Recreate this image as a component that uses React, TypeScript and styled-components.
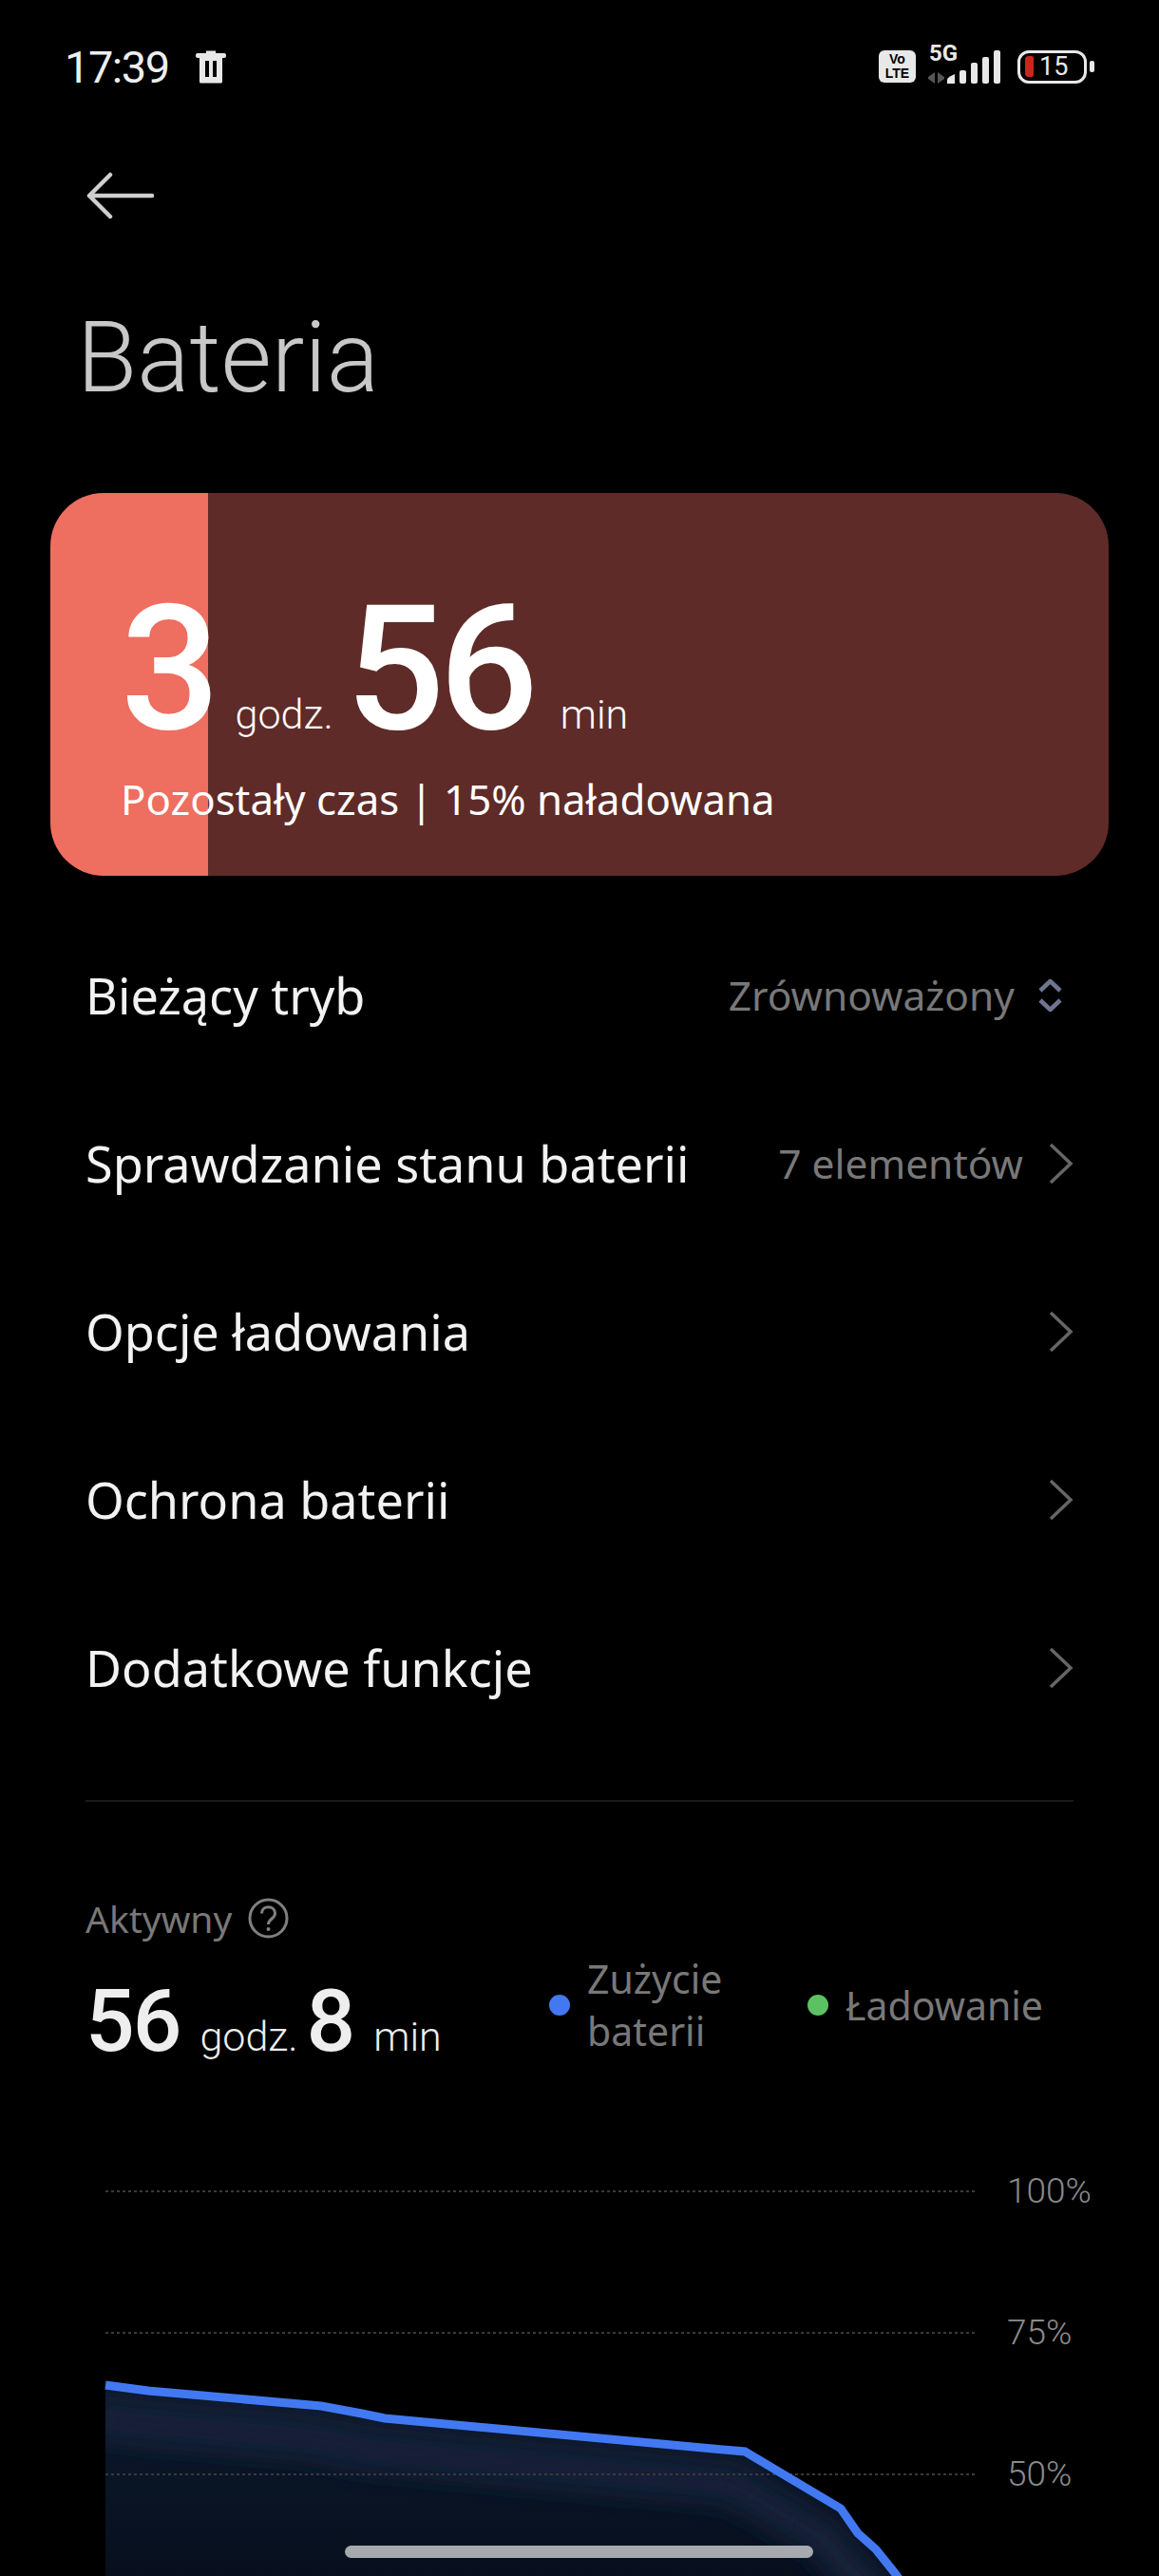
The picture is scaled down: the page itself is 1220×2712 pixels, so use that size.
import { createGlobalStyle, styled } from "styled-components";

const GlobalStyle = createGlobalStyle`
  html, body {
    margin: 0;
    padding: 0;
    background: #000;
  }
  body {
    font-family: "Noto Sans", Roboto, sans-serif;
  }
`;

const rows = [
  { label: "Bieżący tryb", value: "Zrównoważony", icon: "updown" },
  { label: "Sprawdzanie stanu baterii", value: "7 elementów", icon: "chevron" },
  { label: "Opcje ładowania", icon: "chevron" },
  { label: "Ochrona baterii", icon: "chevron" },
  { label: "Dodatkowe funkcje", icon: "chevron" },
];

// chart svg starts at y=2300 of the page
const linePoints =
  "111,212 156,218 338,234 381,242 405,247 784,282 885,342 903,368 922,385 942,410 1000,490";
const areaPoints = `${linePoints} 1000,620 111,620`;
const gridLines = [8, 157, 306];

const TrashIcon = () => (
  <svg width="34" height="36" viewBox="0 0 34 36">
    <path d="M12 1.500h10v3h-10z" fill="#e8e8e8" />
    <rect x="1" y="4" width="32" height="5" rx="2" fill="#e8e8e8" />
    <path
      d="M5 9h24v25a1.500 1.500 0 0 1-1.500 1.500h-21A1.500 1.500 0 0 1 5 34z"
      fill="#e8e8e8"
    />
    <rect x="11" y="12" width="4" height="17" fill="#000" />
    <rect x="19" y="12" width="4" height="17" fill="#000" />
  </svg>
);

const SignalIcon = () => (
  <svg width="78" height="38" viewBox="0 0 78 38">
    <path d="M8 25v12l-7-5v-2zM11 25v12l7-5v-2z" fill="#555" />
    <path d="M21 37v-4q0-2 3-3.500l5-2.500v10z" fill="#e8e8e8" />
    <rect x="34" y="23" width="7" height="14" rx="2" fill="#e8e8e8" />
    <rect x="46" y="15" width="7" height="22" rx="2" fill="#e8e8e8" />
    <rect x="58" y="9" width="7" height="28" rx="2" fill="#e8e8e8" />
    <rect x="70" y="2" width="7" height="35" rx="2" fill="#e8e8e8" />
  </svg>
);

const BackIcon = () => (
  <svg width="72" height="50" viewBox="0 0 72 50" fill="none">
    <path
      d="M26 3 4 25l22 22M4 25h66"
      stroke="#cfcfcf"
      strokeWidth="4.500"
      strokeLinecap="round"
      strokeLinejoin="round"
    />
  </svg>
);

const ChevronIcon = () => (
  <svg width="27" height="46" viewBox="0 0 27 46" fill="none">
    <path d="M3 3l21 20L3 43" stroke="#666" strokeWidth="3.500" />
  </svg>
);

const UpDownIcon = () => (
  <svg width="27" height="36" viewBox="0 0 27 36" fill="none">
    <path
      d="M3 13 13.500 3 24 13M3 23l10.500 10L24 23"
      stroke="#6f7590"
      strokeWidth="4.500"
      strokeLinejoin="round"
    />
  </svg>
);

const HelpIcon = () => (
  <svg width="43" height="43" viewBox="0 0 43 43" fill="none">
    <circle cx="21.500" cy="21.500" r="19.500" stroke="#808080" strokeWidth="3" />
    <path
      d="M14.500 16.500c0-9 14-9 14 0 0 5.500-7 5.500-7 11.500"
      stroke="#808080"
      strokeWidth="3"
    />
    <circle cx="21.500" cy="33" r="2" fill="#808080" />
  </svg>
);

const BatteryChart = () => (
  <ChartSvg viewBox="0 0 1220 412">
    <defs>
      <linearGradient id="areaFill" x1="0" y1="0" x2="0" y2="1">
        <stop offset="0" stopColor="#0c1a2d" />
        <stop offset="0.5" stopColor="#070f1d" />
        <stop offset="1" stopColor="#04080f" />
      </linearGradient>
      <clipPath id="areaClip">
        <polygon points={areaPoints} />
      </clipPath>
      <filter id="glow" x="-10%" y="-50%" width="120%" height="200%">
        <feGaussianBlur stdDeviation="14" />
      </filter>
    </defs>
    <polygon points={areaPoints} fill="url(#areaFill)" />
    <g clipPath="url(#areaClip)">
      <polyline
        points={linePoints}
        fill="none"
        stroke="#12223a"
        strokeWidth="40"
        filter="url(#glow)"
        transform="translate(-14 34)"
      />
    </g>
    {gridLines.map((y) => (
      <line
        key={y}
        x1="111"
        x2="1026"
        y1={y}
        y2={y}
        stroke="#3a3a3a"
        strokeWidth="2"
        strokeDasharray="3 3"
      />
    ))}
    <polyline points={linePoints} fill="none" stroke="#4279f2" strokeWidth="9" />
  </ChartSvg>
);

const App = () => {
  return (
    <>
      <GlobalStyle />
      <Page>
        <StatusBar>
          <StatusLeft>
            <Clock>17:39</Clock>
            <TrashIcon />
          </StatusLeft>
          <StatusRight>
            <VoLte>
              <span>Vo</span>
              <span>LTE</span>
            </VoLte>
            <Network>
              <FiveG>5G</FiveG>
              <SignalIcon />
            </Network>
            <Battery>
              <BatteryFill />
              <BatteryLevel>15</BatteryLevel>
            </Battery>
            <BatteryNub />
          </StatusRight>
        </StatusBar>

        <BackRow>
          <BackIcon />
        </BackRow>

        <Title>Bateria</Title>

        <Card $level={166}>
          <TimeLine>
            <BigNumber $tight>3</BigNumber>
            <BigUnit>godz.</BigUnit>
            <BigNumber>56</BigNumber>
            <BigUnit>min</BigUnit>
          </TimeLine>
          <CardNote>Pozostały czas | 15% naładowana</CardNote>
        </Card>

        <List>
          {rows.map((row) => (
            <Row key={row.label}>
              <RowLabel>{row.label}</RowLabel>
              {row.value && <RowValue>{row.value}</RowValue>}
              <RowIcon $small={row.icon === "updown"}>
                {row.icon === "updown" ? <UpDownIcon /> : <ChevronIcon />}
              </RowIcon>
            </Row>
          ))}
        </List>

        <Divider />

        <Stats>
          <Active>
            Aktywny
            <HelpIcon />
          </Active>
          <StatsRow>
            <Total>
              <TotalNumber>56</TotalNumber>
              <TotalUnit>godz.</TotalUnit>
              <TotalNumber>8</TotalNumber>
              <TotalUnit>min</TotalUnit>
            </Total>
            <Legend>
              <LegendItem>
                <Dot $color="#4279f2" />
                <LegendText $width={150}>Zużycie baterii</LegendText>
              </LegendItem>
              <LegendItem>
                <Dot $color="#5cc162" />
                <LegendText>Ładowanie</LegendText>
              </LegendItem>
            </Legend>
          </StatsRow>
        </Stats>

        <ChartWrap>
          <BatteryChart />
          <ChartLabels>
            <ChartLabel>100%</ChartLabel>
            <ChartLabel>75%</ChartLabel>
            <ChartLabel>50%</ChartLabel>
          </ChartLabels>
        </ChartWrap>

        <HomeBar />
      </Page>
    </>
  );
};

export default App;

const Page = styled.div`
  position: relative;
  width: 1220px;
  height: 2712px;
  overflow: hidden;
  background: #000;
  color: #f2f2f2;
`;

const StatusBar = styled.div`
  display: flex;
  justify-content: space-between;
  align-items: center;
  height: 140px;
  padding: 0 68px;
`;

const StatusLeft = styled.div`
  display: flex;
  align-items: center;
  gap: 27px;
`;

const Clock = styled.div`
  font-family: Roboto, sans-serif;
  font-size: 47px;
  font-weight: 400;
  letter-spacing: -1.500px;
  color: #eee;
  line-height: 1;
`;

const StatusRight = styled.div`
  display: flex;
  align-items: center;
`;

const VoLte = styled.div`
  display: flex;
  flex-direction: column;
  align-items: center;
  justify-content: center;
  width: 39px;
  height: 34px;
  border-radius: 6px;
  background: #e8e8e8;
  color: #000;
  font-family: "Liberation Sans", sans-serif;
  font-size: 14px;
  font-weight: 700;
  line-height: 15px;
`;

const Network = styled.div`
  position: relative;
  margin-left: 12px;
  display: flex;
`;

const FiveG = styled.div`
  position: absolute;
  left: 2px;
  top: -6px;
  font-family: Roboto, sans-serif;
  font-size: 24px;
  font-weight: 700;
  line-height: 22px;
  color: #e8e8e8;
`;

const Battery = styled.div`
  display: flex;
  align-items: center;
  box-sizing: border-box;
  width: 73px;
  height: 35px;
  margin-left: 17px;
  padding-left: 5px;
  border: 3px solid #e8e8e8;
  border-radius: 12px;
`;

const BatteryFill = styled.div`
  width: 9px;
  height: 22px;
  border-radius: 4px 2px 2px 4px;
  background: #c5281c;
`;

const BatteryLevel = styled.div`
  margin-left: 6px;
  font-family: Roboto, sans-serif;
  font-size: 27px;
  line-height: 1;
  color: #e8e8e8;
`;

const BatteryNub = styled.div`
  width: 5px;
  height: 12px;
  margin-left: 3px;
  border-radius: 2px;
  background: #e8e8e8;
`;

const BackRow = styled.div`
  display: flex;
  align-items: center;
  height: 132px;
  padding-left: 90px;
`;

const Title = styled.h1`
  margin: 45px 0 82px;
  padding-left: 81px;
  font-family: Roboto, sans-serif;
  font-size: 103px;
  font-weight: 300;
  line-height: 120px;
  color: #c8c8c8;
`;

const Card = styled.div<{ $level: number }>`
  box-sizing: border-box;
  width: 1114px;
  height: 403px;
  margin-left: 53px;
  padding: 90px 0 0 74px;
  border-radius: 56px;
  background: linear-gradient(
    to right,
    #ee6e60 ${(p) => p.$level}px,
    #5e2b28 ${(p) => p.$level}px
  );
  color: #fff;
`;

const TimeLine = styled.div`
  display: flex;
  align-items: baseline;
  height: 190px;
`;

const BigNumber = styled.span<{ $tight?: boolean }>`
  margin-right: ${(p) => (p.$tight ? "-7px" : "0")};
  font-family: Roboto, sans-serif;
  font-size: 184px;
  font-weight: 500;
  letter-spacing: -6px;
  line-height: 190px;
`;

const BigUnit = styled.span`
  margin: 0 13px 0 29px;
  font-family: Roboto, sans-serif;
  font-size: 43px;
  font-weight: 300;
`;

const CardNote = styled.div`
  margin-top: 12px;
  font-size: 43.800px;
  line-height: 60px;
`;

const List = styled.div`
  margin-top: 37px;
`;

const Row = styled.div`
  display: flex;
  align-items: center;
  box-sizing: border-box;
  height: 177px;
  padding: 0 90px;
`;

const RowLabel = styled.div`
  flex: 1;
  font-size: 52.200px;
  color: #f2f2f2;
  white-space: nowrap;
`;

const RowValue = styled.div`
  font-size: 42.500px;
  color: #787878;
`;

const RowIcon = styled.div<{ $small: boolean }>`
  display: flex;
  margin-left: ${(p) => (p.$small ? "24px" : "26px")};
  margin-right: ${(p) => (p.$small ? "11px" : "0")};
`;

const Divider = styled.div`
  height: 2px;
  margin: 51px 90px 0;
  background: #1a1a1a;
`;

const Stats = styled.div`
  padding: 100px 0 0 90px;
`;

const Active = styled.div`
  display: flex;
  align-items: center;
  gap: 17px;
  height: 44px;
  font-size: 39px;
  color: #787878;
`;

const StatsRow = styled.div`
  display: flex;
  align-items: flex-start;
  margin-top: 15px;
`;

const Total = styled.div`
  display: flex;
  align-items: baseline;
  width: 488px;
  margin-top: 19px;
  color: #eee;
`;

const TotalNumber = styled.span`
  font-family: Roboto, sans-serif;
  font-size: 91px;
  font-weight: 500;
  letter-spacing: -2px;
`;

const TotalUnit = styled.span`
  margin: 0 9px 0 21px;
  font-family: Roboto, sans-serif;
  font-size: 43px;
  font-weight: 300;
`;

const Legend = styled.div`
  display: flex;
  align-items: center;
  gap: 82px;
`;

const LegendItem = styled.div`
  display: flex;
  align-items: center;
  gap: 18px;
`;

const Dot = styled.span<{ $color: string }>`
  width: 22px;
  height: 22px;
  border-radius: 50%;
  background: ${(p) => p.$color};
`;

const LegendText = styled.div<{ $width?: number }>`
  width: ${(p) => (p.$width ? `${p.$width}px` : "auto")};
  font-size: 41px;
  line-height: 55px;
  color: #787878;
`;

const ChartWrap = styled.div`
  position: relative;
  margin-top: 118px;
`;

const ChartSvg = styled.svg`
  display: block;
  width: 1220px;
  height: 412px;
  overflow: visible;
`;

const ChartLabels = styled.div`
  position: absolute;
  left: 1060px;
  top: -17px;
  display: flex;
  flex-direction: column;
  gap: 99px;
`;

const ChartLabel = styled.div`
  font-family: Roboto, sans-serif;
  font-size: 37px;
  font-weight: 300;
  line-height: 50px;
  color: #8a8a8a;
`;

const HomeBar = styled.div`
  position: absolute;
  left: 363px;
  top: 2680px;
  width: 493px;
  height: 13px;
  border-radius: 7px;
  background: #a6a9ad;
`;
